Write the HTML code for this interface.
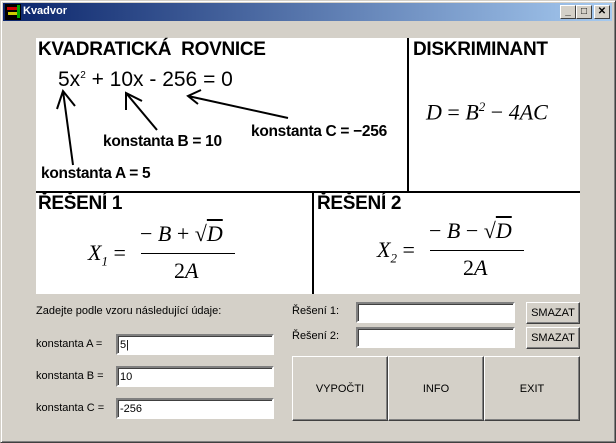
<!DOCTYPE html>
<html><head><meta charset="utf-8"><style>
*{margin:0;padding:0;box-sizing:border-box}
body{width:616px;height:443px;background:#d4d0c8;position:relative;overflow:hidden;font-family:"Liberation Sans",sans-serif}
.win{position:absolute;left:0;top:0;width:616px;height:443px;border:1px solid #d4d0c8;border-right-color:#404040;border-bottom-color:#404040;box-shadow:inset 1px 1px #fff,inset -1px -1px #808080}
.title{position:absolute;left:3px;top:3px;width:609px;height:18px;background:linear-gradient(90deg,#0a246a,#a6caf0)}
.title span{position:absolute;left:20px;top:2px;color:#fff;font-weight:bold;font-size:11px}
.icon{position:absolute;left:2px;top:1px;width:16px;height:16px;background:#000}
.tb{position:absolute;top:2px;width:16px;height:14px;background:#d4d0c8;border:1px solid;border-color:#fff #404040 #404040 #fff;font-size:10px;text-align:center;line-height:12px;font-weight:bold}
.panel{position:absolute;left:36px;top:38px;width:544px;height:256px;background:#fff}
.a{position:absolute;white-space:nowrap}
.h{font-weight:bold;font-size:19px;letter-spacing:-0.3px}
.l{font-size:15.5px;font-weight:bold;letter-spacing:-0.3px}
.m{font-family:"Liberation Serif",serif;font-style:italic;font-size:22px}
.inp{position:absolute;background:#fff;border:2px solid;border-color:#808080 #fff #fff #808080;box-shadow:inset 1px 1px #404040;font-size:11px;padding:3px 0 0 2px}
.btn{position:absolute;background:#d4d0c8;border:1px solid;border-color:#fff #404040 #404040 #fff;box-shadow:inset -1px -1px #808080;font-size:11px;display:flex;align-items:center;justify-content:center}
.t{position:absolute;font-size:11px}
</style></head><body>
<div class="win"></div>
<div class="title"><div class="icon"><div style="position:absolute;left:2px;top:3px;width:10px;height:3px;background:#c00"></div><div style="position:absolute;left:3px;top:8px;width:10px;height:3px;background:#cc0"></div><div style="position:absolute;left:12px;top:1px;width:3px;height:13px;background:#0a0"></div></div><span>Kvadvor</span>
<div class="tb" style="left:557px">_</div><div class="tb" style="left:573px">□</div><div class="tb" style="left:591px">✕</div></div>
<div class="panel">
<div class="a h" style="left:2px;top:1px">KVADRATICKÁ&nbsp; ROVNICE</div>
<div class="a h" style="left:377px;top:1px">DISKRIMINANT</div>
<div class="a" style="left:22px;top:30px;font-size:21px">5x<sup style="font-size:10px">2</sup> + 10x - 256 = 0</div>
<div class="a l" style="left:67px;top:95px">konstanta B = 10</div>
<div class="a l" style="left:215px;top:85px">konstanta C = −256</div>
<div class="a l" style="left:5px;top:127px">konstanta A = 5</div>
<svg class="a" style="left:0;top:0" width="372" height="153"><g stroke="#000" stroke-width="2" fill="none">
<path d="M37 127 L27 53 M21 71 L27 53 L39 68"/><path d="M121 92 L90 55 M90 72 L90 55 L106 63"/><path d="M252 80 L152 58 M165 52 L152 58 L162 66"/></g></svg>
<div class="a m" style="left:390px;top:61px">D <span style="font-style:normal">=</span> B<sup style="font-size:13px">2</sup> <span style="font-style:normal">−</span> 4AC</div>
<div style="position:absolute;left:371px;top:0;width:2px;height:154px;background:#000"></div>
<div style="position:absolute;left:0;top:153px;width:544px;height:2px;background:#000"></div>
<div style="position:absolute;left:276px;top:154px;width:2px;height:102px;background:#000"></div>
<div class="a h" style="left:2px;top:155px">ŘEŠENÍ 1</div>
<div class="a h" style="left:281px;top:155px">ŘEŠENÍ 2</div>
<div class="a m" style="left:52px;top:202px">X<sub style="font-size:13px">1</sub> <span style="font-style:normal">=</span></div>
<div class="a m" style="left:104px;top:183px"><span style="font-style:normal">−</span> B <span style="font-style:normal">+ √</span><span style="text-decoration:overline">D</span></div>
<div style="position:absolute;left:105px;top:215px;width:94px;height:1px;background:#000"></div>
<div class="a m" style="left:138px;top:220px"><span style="font-style:normal">2</span>A</div>
<div class="a m" style="left:341px;top:199px">X<sub style="font-size:13px">2</sub> <span style="font-style:normal">=</span></div>
<div class="a m" style="left:393px;top:180px"><span style="font-style:normal">−</span> B <span style="font-style:normal">− √</span><span style="text-decoration:overline">D</span></div>
<div style="position:absolute;left:394px;top:212px;width:94px;height:1px;background:#000"></div>
<div class="a m" style="left:427px;top:217px"><span style="font-style:normal">2</span>A</div>
</div>
<div class="t" style="left:36px;top:305px">Zadejte podle vzoru následující údaje:</div>
<div class="t" style="left:36px;top:338px">konstanta A =</div>
<div class="t" style="left:36px;top:370px">konstanta B =</div>
<div class="t" style="left:36px;top:402px">konstanta C =</div>
<div class="inp" style="left:116px;top:334px;width:158px;height:21px">5|</div>
<div class="inp" style="left:116px;top:366px;width:158px;height:21px">10</div>
<div class="inp" style="left:116px;top:398px;width:158px;height:21px">-256</div>
<div class="t" style="left:292px;top:305px">Řešení 1:</div>
<div class="t" style="left:292px;top:330px">Řešení 2:</div>
<div class="inp" style="left:356px;top:302px;width:159px;height:21px"></div>
<div class="inp" style="left:356px;top:327px;width:159px;height:21px"></div>
<div class="btn" style="left:526px;top:302px;width:54px;height:22px">SMAZAT</div>
<div class="btn" style="left:526px;top:327px;width:54px;height:22px">SMAZAT</div>
<div class="btn" style="left:292px;top:356px;width:96px;height:65px">VYPOČTI</div>
<div class="btn" style="left:388px;top:356px;width:96px;height:65px">INFO</div>
<div class="btn" style="left:484px;top:356px;width:96px;height:65px">EXIT</div>
</body></html>
